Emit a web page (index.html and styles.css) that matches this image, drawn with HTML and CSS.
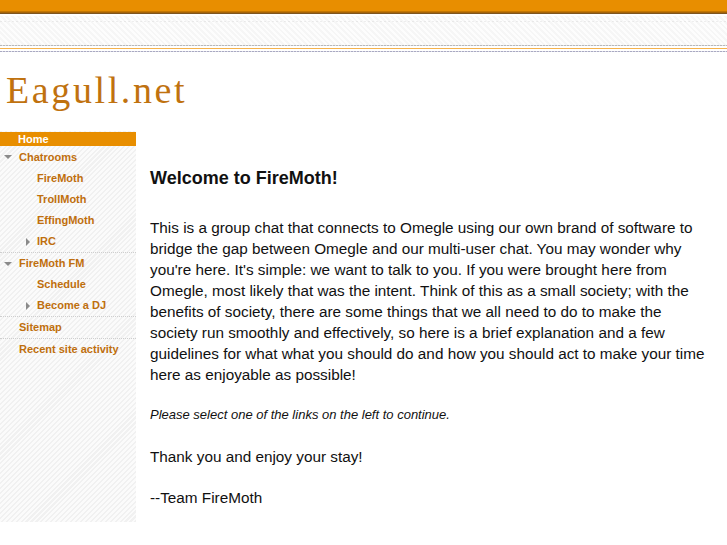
FILE: index.html
```html
<!DOCTYPE html>
<html>
<head>
<meta charset="utf-8">
<link rel="stylesheet" href="styles.css">
</head>
<body>
<div class="top">
  <div class="bar"></div>
  <div class="bar-edge"></div>
  <div class="haze"></div>
  <div class="rule-grey"></div>
  <div class="rule-gap"></div>
  <div class="rule-orange"></div>
  <div class="rule-gap2"></div>
  <div class="rule-blue"></div>
</div>
<div class="masthead"><span class="site-title">Eagull.net</span></div>
<div class="page">
  <nav class="sidebar">
    <div class="item home">Home</div>
    <div class="item lvl0"><span class="tri down"></span>Chatrooms</div>
    <div class="item lvl1">FireMoth</div>
    <div class="item lvl1">TrollMoth</div>
    <div class="item lvl1">EffingMoth</div>
    <div class="item lvl1"><span class="tri right"></span>IRC</div>
    <div class="item lvl0 sep"><span class="tri down"></span>FireMoth FM</div>
    <div class="item lvl1">Schedule</div>
    <div class="item lvl1"><span class="tri right"></span>Become a DJ</div>
    <div class="item lvl0 sep">Sitemap</div>
    <div class="item lvl0 sep">Recent site activity</div>
  </nav>
  <main class="content">
    <h1 class="heading">Welcome to FireMoth!</h1>
    <p class="text">This is a group chat that connects to Omegle using our own brand of software to bridge the gap between Omegle and our multi-user chat. You may wonder why you're here. It's simple: we want to talk to you. If you were brought here from Omegle, most likely that was the intent. Think of this as a small society; with the benefits of society, there are some things that we all need to do to make the society run smoothly and effectively, so here is a brief explanation and a few guidelines for what what you should do and how you should act to make your time here as enjoyable as possible!</p>
    <p class="note">Please select one of the links on the left to continue.</p>
    <p class="text thanks">Thank you and enjoy your stay!</p>
    <p class="text sign">--Team FireMoth</p>
  </main>
</div>
</body>
</html>
```

FILE: styles.css
```css
html, body {
  margin: 0;
  padding: 0;
  background: #ffffff;
}
body {
  width: 727px;
  font-family: "Liberation Sans", Arial, sans-serif;
}
.top {
  display: flex;
  flex-direction: column;
}
.bar {
  height: 11px;
  background: #e88e00;
}
.bar-edge {
  height: 3px;
  background: linear-gradient(#c27500 0, #c27500 1px, #a66408 1px, #a66408 2px, #7d5520 2px);
}
.haze {
  height: 29px;
  background:
    repeating-linear-gradient(90deg, rgba(0,0,0,0.06) 0 2px, transparent 2px 4px) 0 5px / 100% 1px no-repeat,
    repeating-linear-gradient(45deg, #f6f6f6 0 2px, #fdfdfd 2px 4px);
  border-top: 2px solid #ffffff;
}
.rule-grey {
  height: 1px;
  background: repeating-linear-gradient(90deg, #b8b8b8 0 2px, #e0e0e0 2px 3px);
}
.rule-gap { height: 2px; }
.rule-orange {
  height: 1px;
  background: #f5b24c;
}
.rule-gap2 { height: 2px; }
.rule-blue {
  height: 1px;
  background: repeating-linear-gradient(90deg, #a9a9c2 0 2px, #dcdce6 2px 3px);
}
.masthead {
  height: 79px;
  padding-left: 6px;
  display: flex;
  align-items: flex-start;
}
.site-title {
  font-family: "Liberation Serif", "Times New Roman", serif;
  font-size: 38px;
  letter-spacing: 2.6px;
  color: #c0720f;
  margin-top: 18px;
  line-height: 40px;
}
.page {
  display: flex;
  align-items: stretch;
}
.sidebar {
  width: 136px;
  flex: none;
  height: 390px;
  padding-top: 1px;
  background: repeating-linear-gradient(-45deg, #f1f1f1 0 1.5px, #fbfbfb 1.5px 3.5px);
  display: flex;
  flex-direction: column;
}
.item {
  position: relative;
  height: 21px;
  line-height: 21px;
  font-size: 11px;
  font-weight: bold;
  color: #bf6f0d;
  white-space: nowrap;
}
.item.home {
  height: 14px;
  line-height: 14px;
  background: #e88e00;
  color: #ffffff;
  padding-left: 18px;
}
.item.home + .item {
  height: 22px;
  line-height: 22px;
}
.lvl0 { padding-left: 19px; }
.lvl1 { padding-left: 37px; }
.sep {
  border-top: 1px dotted #cfcfcf;
}
.tri {
  position: absolute;
  width: 0;
  height: 0;
}
.tri.down {
  left: 4px;
  top: 9px;
  border-left: 4px solid transparent;
  border-right: 4px solid transparent;
  border-top: 4px solid #8a8a8a;
}
.tri.right {
  left: 26px;
  top: 7px;
  border-top: 4px solid transparent;
  border-bottom: 4px solid transparent;
  border-left: 4px solid #8a8a8a;
}
.content {
  flex: 1;
  padding: 0 14px 0 14px;
  color: #111111;
}
.heading {
  font-size: 18px;
  font-weight: bold;
  margin: 36px 0 0 0;
  line-height: 22px;
}
.text {
  font-size: 15.3px;
  line-height: 21px;
  margin: 28px 0 0 0;
}
.note {
  font-size: 13px;
  font-style: italic;
  line-height: 18px;
  margin: 21px 0 0 0;
}
.text.thanks { margin-top: 22px; }
.text.sign { margin-top: 20px; }
```
